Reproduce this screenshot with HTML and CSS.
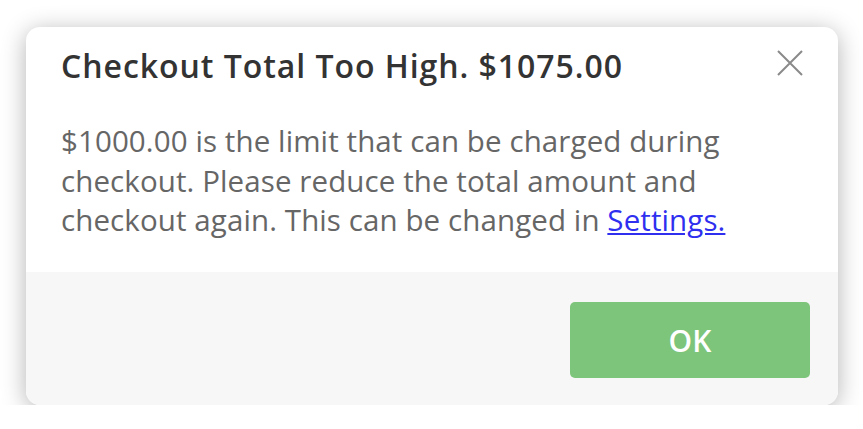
FILE: index.html
```html
<!DOCTYPE html>
<html>
<head>
<meta charset="utf-8">
<link rel="stylesheet" href="styles.css">
</head>
<body>
<div class="page">
  <div class="modal">
    <div class="modal-body">
      <div class="header">
        <h1 class="title">Checkout Total Too High. $1075.00</h1>
        <button class="close" aria-label="Close">
          <svg width="26" height="26" viewBox="0 0 26 26"><path d="M1 1L25 25M25 1L1 25" stroke="#8a8a8a" stroke-width="2" fill="none"/></svg>
        </button>
      </div>
      <p class="message">$1000.00 is the limit that can be charged during checkout. Please reduce the total amount and checkout again. This can be changed in <a href="#" class="link">Settings.</a></p>
    </div>
    <div class="footer">
      <button class="ok">OK</button>
    </div>
  </div>
</div>
</body>
</html>
```
FILE: styles.css
```css
html, body {
  margin: 0;
  padding: 0;
  background: #ffffff;
}
.page {
  padding: 27px 25px 0 26px;
}
.modal {
  width: 812px;
  height: 378px;
  background: #ffffff;
  border-radius: 14px;
  box-shadow: 0 4px 24px rgba(0,0,0,0.3);
  overflow: hidden;
  display: flex;
  flex-direction: column;
  font-family: "Open Sans", sans-serif;
}
.modal-body {
  height: 245px;
  padding: 0 35px;
  box-sizing: border-box;
}
.header {
  display: flex;
  align-items: flex-start;
  justify-content: space-between;
  padding-top: 19px;
}
.title {
  margin: 0;
  font-size: 32px;
  font-weight: 600;
  letter-spacing: 0.95px;
  color: #333333;
  line-height: 40px;
}
.close {
  border: 0;
  background: none;
  padding: 0;
  margin: 4px 0 0 0;
  width: 26px;
  height: 26px;
  cursor: pointer;
}
.close svg { display: block; }
.message {
  margin: 35px 0 0 0;
  font-size: 29.5px;
  line-height: 39.5px;
  letter-spacing: 0.1px;
  color: #666666;
  max-width: 700px;
}
.link {
  color: #2f2ff0;
  text-decoration: underline;
}
.footer {
  flex: 1;
  background: #f7f7f7;
  display: flex;
  justify-content: flex-end;
  align-items: flex-start;
  padding: 30px 28px 0 0;
}
.ok {
  width: 240px;
  height: 76px;
  border: 0;
  border-radius: 5px;
  background: #7dc57a;
  color: #ffffff;
  font-family: "Open Sans", sans-serif;
  font-size: 30px;
  font-weight: 600;
  padding: 0;
  cursor: pointer;
}
```
